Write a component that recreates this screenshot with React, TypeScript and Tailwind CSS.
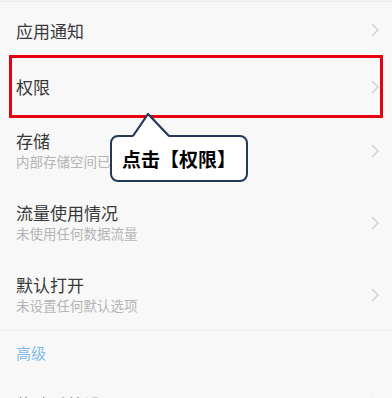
import React from 'react';

const Chevron: React.FC = () => (
  <svg width="8" height="14" viewBox="0 0 8 14" className="shrink-0">
    <polyline points="1,1 7,7 1,13" fill="none" stroke="#cfcfcf" strokeWidth="1.4" />
  </svg>
);

type RowProps = { title: string; sub?: string; right?: string };

const Row: React.FC<RowProps & { h: string }> = ({ title, sub, right, h }) => (
  <div className={`flex items-center justify-between pl-4 pr-[13px] ${h}`}>
    <div className="flex flex-col">
      <span className="text-[17px] leading-[21px] text-[#383838]">{title}</span>
      {sub && <span className="text-[13.5px] leading-[21px] text-[#b4b4b4]">{sub}</span>}
    </div>
    <div className="flex items-center gap-2">
      {right && <span className="text-[14px] text-[#b4b4b4]">{right}</span>}
      <Chevron />
    </div>
  </div>
);

const App: React.FC = () => {
  return (
    <div
      className="relative w-[392px] h-[398px] overflow-hidden bg-[#f8f8f8]"
      style={{ fontFamily: '"Noto Sans CJK SC", "Noto Sans", sans-serif' }}
    >
      <div className="h-[1px] bg-[#f3f3f3]" />
      <div className="border-t border-[#ececec]">
        <Row h="h-[56px]" title="应用通知" />
        <Row h="h-[57px]" title="权限" />
        <Row h="h-[72px]" title="存储" sub="内部存储空间已使用 52.3MB" />
        <Row h="h-[72px]" title="流量使用情况" sub="未使用任何数据流量" />
        <Row h="h-[71px]" title="默认打开" sub="未设置任何默认选项" />
      </div>
      <div className="border-t border-[#eeeeee] h-[46px] flex items-center pl-4">
        <span className="text-[15px] text-[#82b8e8]">高级</span>
      </div>
      <Row h="h-[56px]" title="修改系统设置" right="已允许" />

      {/* red highlight */}
      <div className="absolute left-[9px] top-[55px] w-[374px] h-[63px] border-[3px] border-[#e60012]" />

      {/* callout */}
      <div className="absolute left-[110px] top-[135px] w-[138px] h-[47px] rounded-[8px] border-2 border-[#22395a] bg-white flex items-center justify-center">
        <span className="text-[19px] font-bold text-black leading-none">点击【权限】</span>
      </div>
      <svg className="absolute left-[130px] top-[111px]" width="42" height="27" viewBox="0 0 42 27">
        <polygon points="3,26 18,3 39,26" fill="white" />
        <polyline points="3,25 18,3 39,25" fill="none" stroke="#22395a" strokeWidth="2.2" strokeLinejoin="round" />
      </svg>
    </div>
  );
};

export default App;
